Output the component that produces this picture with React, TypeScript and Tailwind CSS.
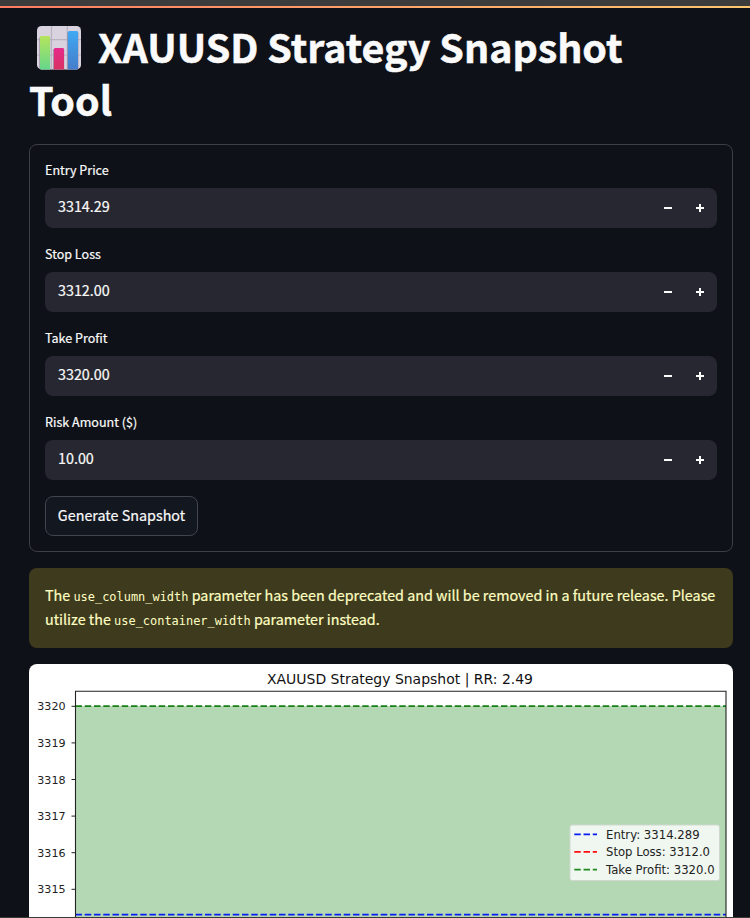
const fields = [
  { label: "Entry Price", value: "3314.29" },
  { label: "Stop Loss", value: "3312.00" },
  { label: "Take Profit", value: "3320.00" },
  { label: "Risk Amount ($)", value: "10.00" },
];

const ticks = [3320, 3319, 3318, 3317, 3316, 3315];

const legend = [
  { label: "Entry: 3314.289", color: "#0b1df5", width: 93.6 },
  { label: "Stop Loss: 3312.0", color: "#ff0d0d", width: 104 },
  { label: "Take Profit: 3320.0", color: "#1f8a1f", width: 108.6 },
];

function ChartEmoji() {
  return (
    <svg className="mr-[17px] ml-[8px] mt-[4px] h-[44px] w-[44px] shrink-0" viewBox="0 0 44 44">
      <defs>
        <linearGradient id="green" x1="0" y1="0" x2="0" y2="1">
          <stop offset="0" stopColor="#b5e45c" />
          <stop offset="1" stopColor="#62d68d" />
        </linearGradient>
        <linearGradient id="pink" x1="0" y1="0" x2="0" y2="1">
          <stop offset="0" stopColor="#e62a8b" />
          <stop offset="1" stopColor="#d63360" />
        </linearGradient>
        <linearGradient id="blue" x1="0" y1="0" x2="0" y2="1">
          <stop offset="0" stopColor="#3fa9f3" />
          <stop offset="1" stopColor="#467bc9" />
        </linearGradient>
        <clipPath id="tile">
          <rect width="44" height="43.4" rx="4.5" />
        </clipPath>
      </defs>
      <g clipPath="url(#tile)">
        <rect width="44" height="44" fill="#d9d2df" />
        <path d="M14.5 0V44M30.3 0V44M0 13.6H44M0 29H44" stroke="#b9b2c0" strokeWidth="1.2" />
        <rect x="2.2" y="11" width="11" height="34" rx="1.3" fill="#a59aae" />
        <rect x="16.2" y="23" width="11" height="22" rx="1.3" fill="#a08299" />
        <rect x="30.2" y="6" width="11.2" height="39" rx="1.3" fill="#8f92ad" />
        <rect x="3" y="10" width="10" height="35" rx="1.3" fill="url(#green)" />
        <rect x="17" y="22" width="10" height="23" rx="1.3" fill="url(#pink)" />
        <rect x="31" y="5" width="10" height="40" rx="1.3" fill="url(#blue)" />
      </g>
    </svg>
  );
}

function NumberField({ label, value }: { label: string; value: string }) {
  return (
    <div className="flex flex-col">
      <label className="mb-1 flex h-6 items-center pb-1 text-[12.55px] leading-5">{label}</label>
      <div className="flex h-10 items-center rounded-lg bg-[#262730] pr-px pl-[13px]">
        <span className="flex-1 pb-1 text-[14.33px] leading-6">{value}</span>
        <button className="flex h-10 w-8 items-center justify-center" aria-label="Decrease">
          <svg width="8" height="8" viewBox="0 0 8 8" fill="#fafafa">
            <rect y="3" width="8" height="2" />
          </svg>
        </button>
        <button className="flex h-10 w-8 items-center justify-center" aria-label="Increase">
          <svg width="8" height="8" viewBox="0 0 8 8" fill="#fafafa">
            <path d="M0 3h3V0h2v3h3v2H5v3H3V5H0z" />
          </svg>
        </button>
      </div>
    </div>
  );
}

function SnapshotChart() {
  return (
    <svg
      className="block h-[253px] w-[704px] shrink-0 rounded-t-lg bg-white font-['DejaVu_Sans',sans-serif] font-normal [-webkit-text-stroke:0]"
      viewBox="29 664 704 253"
    >
      <rect x="76" y="706" width="650" height="211" fill="#b3d8b3" />
      <path d="M75.5 706H726" stroke="#168016" strokeWidth="1.75" strokeDasharray="6.46 2.79" />
      <path d="M75.5 914.6H726" stroke="#0b1df5" strokeWidth="1.75" strokeDasharray="6.46 2.79" />
      <path d="M75.5 920V691.3H726V920" fill="none" stroke="#222" strokeWidth="1.1" />
      <text x="400" y="684" textAnchor="middle" fontSize="14.5" textLength="266" lengthAdjust="spacingAndGlyphs" fill="#111">
        XAUUSD Strategy Snapshot | RR: 2.49
      </text>
      {ticks.map((tick, i) => (
        <g key={tick}>
          <path d={`M71.5 ${706.3 + i * 36.6}H75.5`} stroke="#222" strokeWidth="1" />
          <text
            x="65.6"
            y={710.4 + i * 36.6}
            textAnchor="end"
            fontSize="11.3"
            textLength="28.3"
            lengthAdjust="spacingAndGlyphs"
            fill="#222"
          >
            {tick}
          </text>
        </g>
      ))}
      <rect x="570" y="825" width="149.5" height="55.5" rx="2" fill="#f0f7f0" stroke="#cfd8cf" />
      {legend.map((item, i) => (
        <g key={item.label}>
          <path
            d={`M574.3 ${834.3 + i * 17.6}H597`}
            stroke={item.color}
            strokeWidth="1.75"
            strokeDasharray="6.46 2.79"
          />
          <text
            x="606"
            y={838.6 + i * 17.5}
            fontSize="11.7"
            textLength={item.width}
            lengthAdjust="spacingAndGlyphs"
            fill="#222"
          >
            {item.label}
          </text>
        </g>
      ))}
    </svg>
  );
}

export default function App() {
  return (
    <div className="flex h-[918px] w-[750px] flex-col overflow-hidden bg-[#0e1117] font-['Noto_Sans_CJK_SC',sans-serif] text-[#fafafa] [-webkit-text-stroke:0.2px]">
      <div className="h-[6px] shrink-0 bg-[#3c3c3c]" />
      <div className="h-[2px] shrink-0 bg-linear-to-r from-[#ff7b62] to-[#ffc66f]" />
      <main className="flex flex-col pt-[12px] pr-[17px] pl-[29px]">
        <h1 className="mb-[19px] text-[39.4px] leading-[52.5px] font-bold [-webkit-text-stroke:0.5px]">
          <span className="flex h-[52.5px] items-center">
            <ChartEmoji />
            <span>XAUUSD Strategy Snapshot</span>
          </span>
          <span className="block">Tool</span>
        </h1>
        <form className="mb-4 flex h-[408px] shrink-0 flex-col rounded-lg border border-[#3d3f44] px-[15px] pt-[15px]">
          <div className="flex flex-col gap-4">
            {fields.map((field) => (
              <NumberField key={field.label} {...field} />
            ))}
          </div>
          <button
            type="button"
            className="mt-4 flex h-10 w-[153px] items-center justify-center rounded-lg border border-[#41444c] bg-[#131720] pb-[2px] text-[14.33px]"
          >
            Generate Snapshot
          </button>
        </form>
        <div className="mb-4 h-20 shrink-0 rounded-lg bg-[#3e3a1d] px-4 pt-[15px] text-[14.33px] leading-6 whitespace-nowrap text-[#ffffc2]">
          <p className="h-6">
            The <code className="font-['DejaVu_Sans_Mono',monospace] text-[11.95px] leading-4 [-webkit-text-stroke:0]">use_column_width</code>{" "}
            parameter has been deprecated and will be removed in a future release. Please
          </p>
          <p className="h-6">
            utilize the{" "}
            <code className="font-['DejaVu_Sans_Mono',monospace] text-[11.95px] leading-4 [-webkit-text-stroke:0]">use_container_width</code>{" "}
            parameter instead.
          </p>
        </div>
        <SnapshotChart />
      </main>
      <div className="h-px shrink-0 bg-[#3c3b38]" />
    </div>
  );
}
